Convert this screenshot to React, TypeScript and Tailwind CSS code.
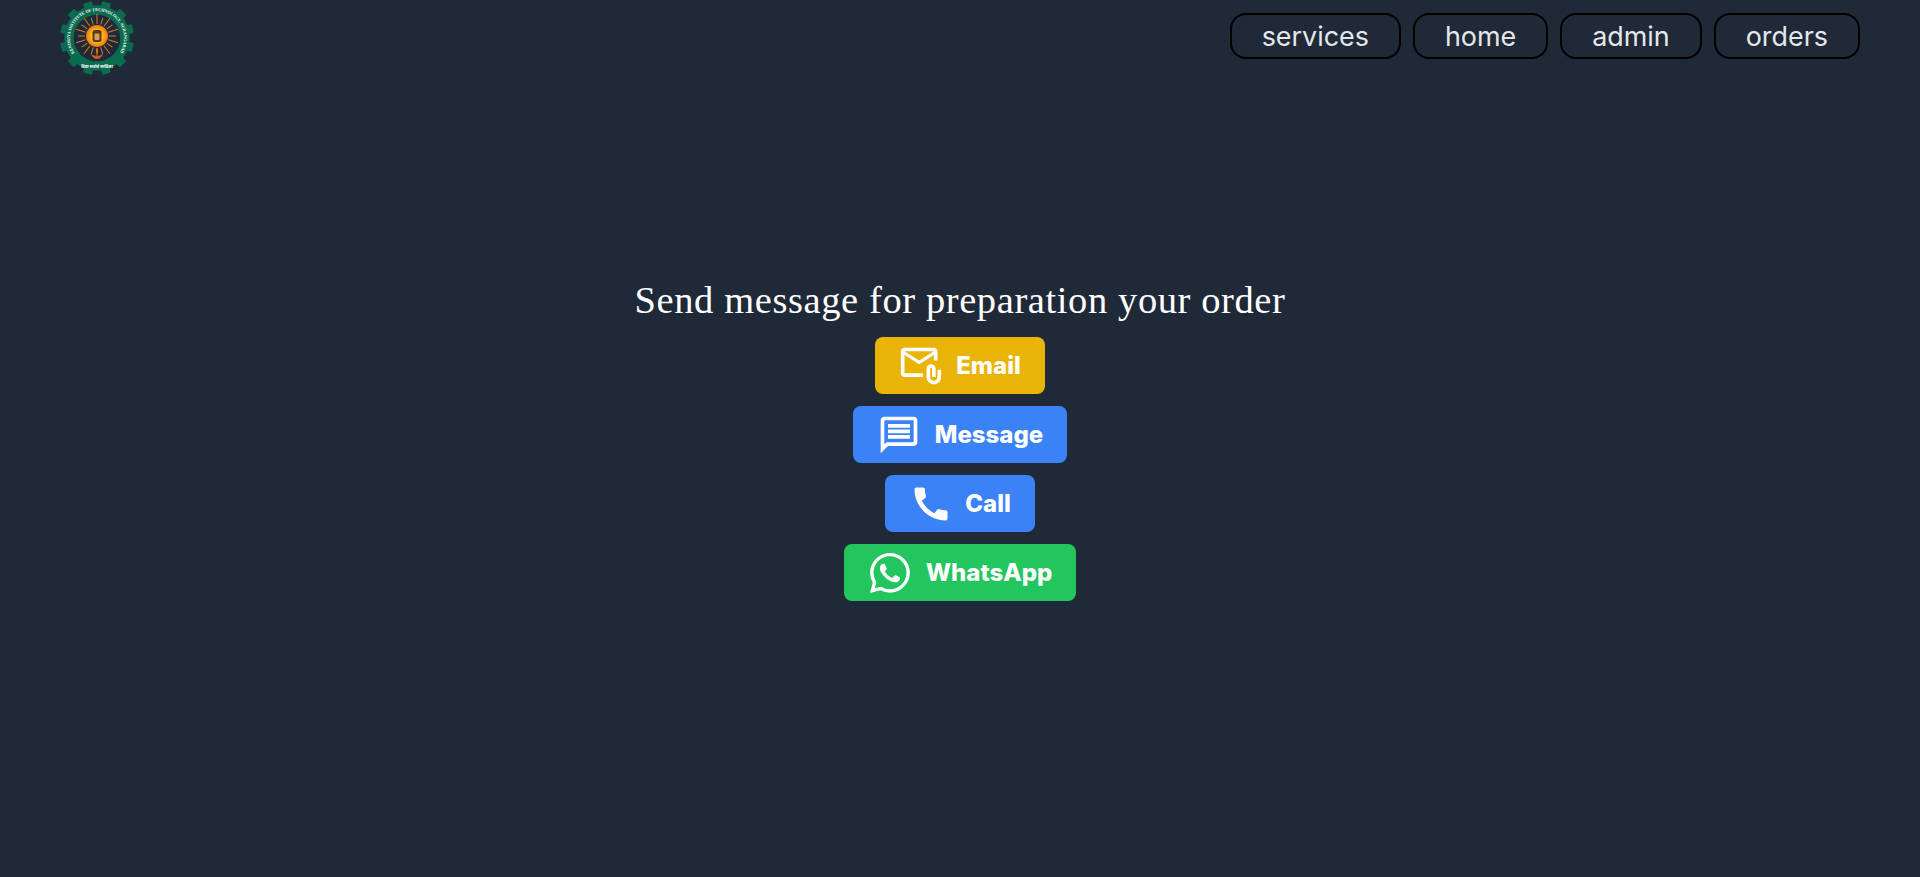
import { MdOutlineAttachEmail, MdOutlineMessage, MdCall } from "react-icons/md";
import { BsWhatsapp } from "react-icons/bs";
import type { ReactNode } from "react";

const navItems = ["services", "home", "admin", "orders"];

function Logo() {
  const teeth = Array.from({ length: 12 }, (_, i) => i * 30 + 15);
  const rays = Array.from({ length: 20 }, (_, i) => i * 18);
  return (
    <svg viewBox="0 0 76 76" className="w-[76px] h-[76px] shrink-0">
      <defs>
        <path id="logo-arc" d="M 15.5 53 A 27 27 0 1 1 60.5 53" />
        <radialGradient id="logo-sun">
          <stop offset="0%" stopColor="#ffe066" />
          <stop offset="65%" stopColor="#f8a81c" />
          <stop offset="100%" stopColor="#e8760c" />
        </radialGradient>
      </defs>
      {teeth.map((a) => (
        <rect key={a} x="33.5" y="1" width="9" height="6" rx="1" fill="#0a6b4f" transform={`rotate(${a} 38 38)`} />
      ))}
      <circle cx="38" cy="38" r="28" fill="none" stroke="#0a6b4f" strokeWidth="9.5" />
      <text fontSize="4.4" fontWeight="700" fill="#ffffff" fontFamily="'Liberation Serif', serif">
        <textPath href="#logo-arc" textLength="115" lengthAdjust="spacingAndGlyphs">
          KENDRIYA INSTITUTE OF TECHNOLOGY, AURANGABAD
        </textPath>
      </text>
      {rays.map((a, i) => (
        <line
          key={a}
          x1="38"
          y1="24"
          x2="38"
          y2={i % 2 ? 17 : 14}
          stroke="#e07820"
          strokeWidth="1"
          transform={`rotate(${a} 38 36)`}
        />
      ))}
      <circle cx="38" cy="36" r="11" fill="url(#logo-sun)" />
      <rect x="33.5" y="30" width="9" height="12" rx="2.5" fill="#5a3a1e" />
      <rect x="35.5" y="33.5" width="5" height="6.5" rx="1" fill="#d8a050" />
      <path d="M32 54 q6 4 12 0 q-2 5 -6 5 q-4 0 -6 -5z" fill="#d9561c" />
      <path d="M38 48 q2 3 0 6 q-2 -3 0 -6z" fill="#e8760c" />
      <text x="38" y="67.5" textAnchor="middle" fontSize="4" fontWeight="700" fill="#ffffff" fontFamily="'Noto Sans', sans-serif">
        विद्या सर्वार्थ साधिका
      </text>
    </svg>
  );
}

function ContactButton({ color, icon, label, gap }: { color: string; icon: ReactNode; label: string; gap: string }) {
  return (
    <button type="button" className={`flex items-center h-[57px] px-6 rounded-lg text-white font-extrabold text-2xl ${gap} ${color}`}>
      {icon}
      <span>{label}</span>
    </button>
  );
}

export default function App() {
  return (
    <div className="h-screen flex flex-col bg-[#1f2937] font-['Inter',sans-serif]">
      <nav className="flex items-start justify-between pl-[59px] pr-[60px]">
        <Logo />
        <ul className="flex gap-3 pt-[13px]">
          {navItems.map((item) => (
            <li key={item} className="h-[46px] px-[30px] flex items-center rounded-2xl border-2 border-black text-[#e5e7eb] text-[26.9px]">
              {item}
            </li>
          ))}
        </ul>
      </nav>

      <main className="flex-1 flex flex-col items-center justify-center gap-3 pb-[76px]">
        <h1 className="text-white text-[38.5px] leading-[49px] tracking-[0.6px] font-['Liberation_Serif',serif]">Send message for preparation your order</h1>
        <ContactButton color="bg-[#eab308]" gap="gap-[13px]" label="Email" icon={<MdOutlineAttachEmail className="w-11 h-11" />} />
        <ContactButton color="bg-[#3b82f6]" gap="gap-[14px]" label="Message" icon={<MdOutlineMessage className="w-11 h-11" />} />
        <ContactButton color="bg-[#3b82f6]" gap="gap-3" label="Call" icon={<MdCall className="w-11 h-11" />} />
        <ContactButton color="bg-[#22c55e]" gap="gap-[16px]" label="WhatsApp" icon={<BsWhatsapp className="w-10 h-10 ml-[2px]" />} />
      </main>
    </div>
  );
}
